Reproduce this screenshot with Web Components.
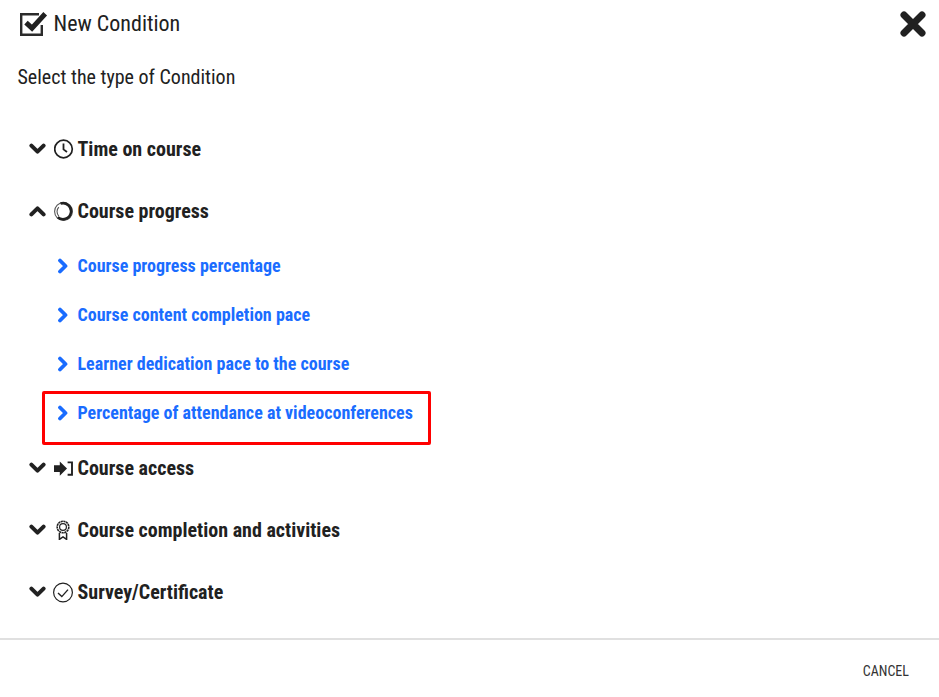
<!DOCTYPE html>
<html>
<head>
<meta charset="utf-8">
<title>New Condition</title>
<style>
  html, body { margin: 0; padding: 0; background: #fff; }
  body { font-family: Roboto, "Liberation Sans", sans-serif; color: #212121; }
</style>
</head>
<body>
<condition-dialog heading="New Condition">
  <condition-group label="Time on course">
    <svg slot="icon" width="20" height="20" viewBox="0 0 20 20"><circle cx="9.5" cy="10" r="8.8" fill="none" stroke="#212121" stroke-width="1.7"/><path d="M9.5 4.6V10.4L13 13" fill="none" stroke="#212121" stroke-width="1.8"/></svg>
  </condition-group>
  <condition-group label="Course progress" open>
    <svg slot="icon" width="20" height="20" viewBox="0 0 20 20"><circle cx="9.5" cy="10.5" r="8.9" fill="none" stroke="#555" stroke-width="1.1"/><path d="M4.8 6A6.6 6.6 0 0 0 4.8 15" fill="none" stroke="#555" stroke-width="1.1"/><path d="M6.5 2.6A8 8 0 1 1 3.8 16.2" fill="none" stroke="#212121" stroke-width="2.6"/></svg>
    <condition-item>Course progress percentage</condition-item>
    <condition-item>Course content completion pace</condition-item>
    <condition-item>Learner dedication pace to the course</condition-item>
    <condition-item highlight>Percentage of attendance at videoconferences</condition-item>
  </condition-group>
  <condition-group label="Course access">
    <svg slot="icon" width="20" height="20" viewBox="0 0 20 20"><path d="M0 7.2H5.8V3.4L13 10.6L5.8 17.8V14H0Z" fill="#212121"/><path d="M13.6 4.4H18V16.8H13.6" fill="none" stroke="#212121" stroke-width="1.9"/></svg>
  </condition-group>
  <condition-group label="Course completion and activities">
    <svg slot="icon" width="20" height="20" viewBox="0 0 20 20"><circle cx="9" cy="7" r="5.8" fill="none" stroke="#212121" stroke-width="1.6" stroke-dasharray="2.2 .5"/><circle cx="9" cy="7" r="3.4" fill="none" stroke="#212121" stroke-width="1.2"/><path d="M5.4 13V19.4L9 17L12.6 19.4V13" fill="none" stroke="#212121" stroke-width="1.5"/></svg>
  </condition-group>
  <condition-group label="Survey/Certificate">
    <svg slot="icon" style="overflow:visible" width="20" height="20" viewBox="0 0 20 20"><circle cx="9" cy="10.5" r="9.4" fill="none" stroke="#212121" stroke-width="1.2"/><path d="M4 11L7.8 14.6L14 7.6" fill="none" stroke="#212121" stroke-width="1.4"/></svg>
  </condition-group>
</condition-dialog>

<script>
class ConditionDialog extends HTMLElement {
  constructor() {
    super();
    this.attachShadow({ mode: 'open' });
    this.shadowRoot.innerHTML = `
      <style>
        :host { display: flex; flex-direction: column; height: 697px; width: 939px; overflow: hidden; box-sizing: border-box; font-stretch: 85%; }
        header { display: flex; align-items: center; height: 48px; padding: 0 12px 0 19px; }
        header svg.check { margin-right: 5px; }
        h1 { margin: 0; flex: 1; font-size: 22px; font-weight: 400; line-height: 48px; }
        .sub { margin: 0; padding: 17px 0 0 17.5px; height: 25px; font-size: 20px; line-height: 25px; }
        .list { flex: 1; padding: 28px 0 0 29px; }
        footer { height: 53px; padding-top: 4px; border-top: 2px solid #e0e0e0; display: flex; justify-content: flex-end; align-items: center; padding-right: 30px; }
        .cancel { font-size: 14px; color: #333; }
      </style>
      <header>
        <svg class="check" width="29.5" height="28" viewBox="0 0 29.5 28">
          <path d="M20 4.2H2.2V24.8H22.8V15" fill="none" stroke="#2b2b2b" stroke-width="2.4"/>
          <path d="M7 12.6L13 18.2L26.2 3.8" fill="none" stroke="#212121" stroke-width="5"/>
        </svg>
        <h1></h1>
        <svg width="28" height="28" viewBox="0 0 28 28">
          <path d="M5 5L23 23M23 5L5 23" stroke="#212121" stroke-width="7" stroke-linecap="round"/>
        </svg>
      </header>
      <p class="sub">Select the type of Condition</p>
      <div class="list"><slot></slot></div>
      <footer><span class="cancel">CANCEL</span></footer>
    `;
    this.shadowRoot.querySelector('h1').textContent = this.getAttribute('heading');
  }
}

class ConditionGroup extends HTMLElement {
  constructor() {
    super();
    this.attachShadow({ mode: 'open' });
    const open = this.hasAttribute('open');
    this.shadowRoot.innerHTML = `
      <style>
        :host { display: block; font-size: 20px; font-weight: 700; }
        .row { display: flex; align-items: center; height: 62px; }
        .row svg.arrow { margin-right: 8px; }
        .icon { display: flex; width: 20px; height: 20px; margin-right: 3.5px; }
        .items { display: flex; flex-direction: column; margin-top: -1px; }
      </style>
      <div class="row">
        <svg class="arrow" width="17" height="12" viewBox="0 0 17 12">
          <path d="${open ? 'M2.4 9.4L8.5 3.3L14.6 9.4' : 'M2.4 2.6L8.5 8.7L14.6 2.6'}" fill="none" stroke="#212121" stroke-width="4" stroke-linecap="round" stroke-linejoin="round"/>
        </svg>
        <span class="icon"><slot name="icon"></slot></span>
        <span class="label"></span>
      </div>
      ${open ? '<div class="items"><slot></slot></div>' : ''}
    `;
    this.shadowRoot.querySelector('.label').textContent = this.getAttribute('label');
  }
}

class ConditionItem extends HTMLElement {
  constructor() {
    super();
    this.attachShadow({ mode: 'open' });
    this.shadowRoot.innerHTML = `
      <style>
        :host { display: block; position: relative; color: #1a6cff; font-size: 18px; font-weight: 700; }
        .row { display: flex; align-items: center; height: 49px; padding-left: 28px; }
        svg { margin-right: 7.5px; }
        .mark { position: absolute; left: 13px; top: 3px; width: 389px; height: 54px; box-sizing: border-box; border: 3px solid #f00; border-radius: 2px; }
      </style>
      <div class="row">
        <svg width="13" height="16" viewBox="0 0 13 16">
          <path d="M3 2.5L8.5 8L3 13.5" fill="none" stroke="#1a6cff" stroke-width="3.8" stroke-linecap="round" stroke-linejoin="round"/>
        </svg>
        <span><slot></slot></span>
      </div>
      ${this.hasAttribute('highlight') ? '<div class="mark"></div>' : ''}
    `;
  }
}

customElements.define('condition-dialog', ConditionDialog);
customElements.define('condition-group', ConditionGroup);
customElements.define('condition-item', ConditionItem);
</script>
</body>
</html>
